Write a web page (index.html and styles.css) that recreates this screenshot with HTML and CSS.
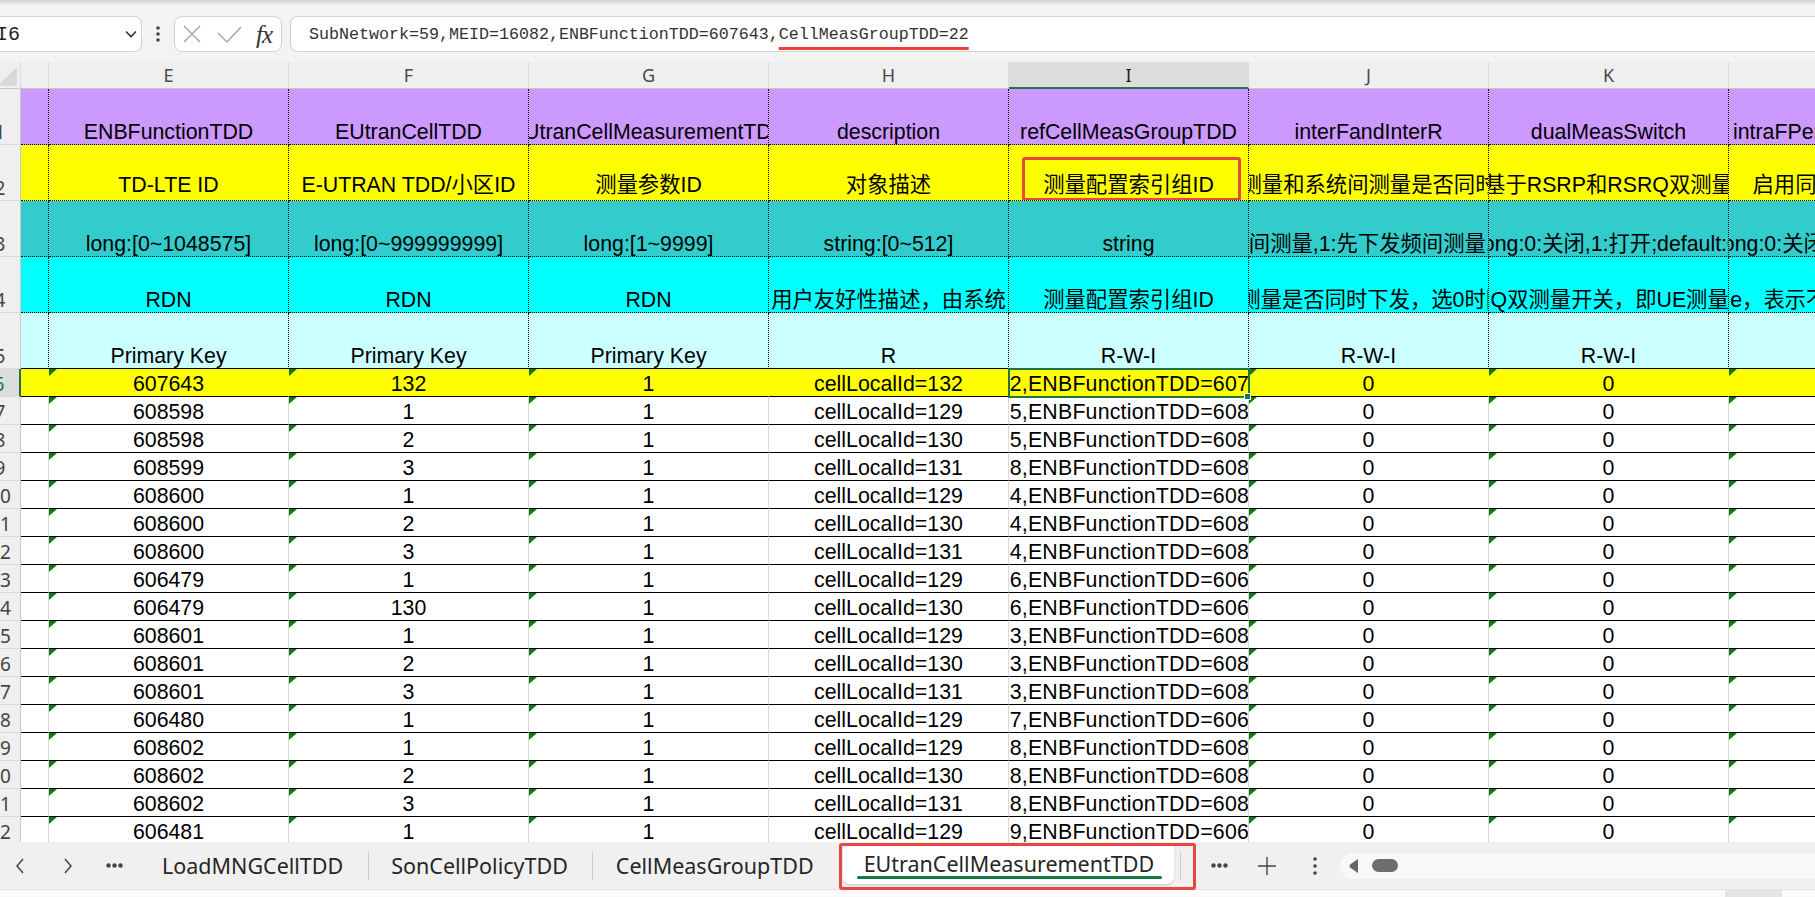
FILE: index.html
```html
<!DOCTYPE html>
<html lang="zh-CN">
<head>
<meta charset="utf-8">
<title>EUtranCellMeasurementTDD</title>
<link rel="stylesheet" href="styles.css">
</head>
<body>
<div class="app">
  <div class="topstrip"></div>
  <div class="toolbar">
    <div class="namebox">
      <span class="ref">I6</span>
      <svg width="12" height="8" viewBox="0 0 12 8"><polyline points="1,1.5 6,6.5 11,1.5" fill="none" stroke="#333" stroke-width="1.6"/></svg>
    </div>
    <div class="vdots"><svg width="4" height="16" viewBox="0 0 4 16"><circle cx="2" cy="2" r="1.8" fill="#444"/><circle cx="2" cy="8" r="1.8" fill="#444"/><circle cx="2" cy="14" r="1.8" fill="#444"/></svg></div>
    <div class="fxbox">
      <svg class="ic-x" width="18" height="18" viewBox="0 0 18 18"><path d="M1 1L17 17M17 1L1 17" stroke="#a8a8a8" stroke-width="1.5" fill="none"/></svg>
      <svg class="ic-ok" width="25" height="17" viewBox="0 0 25 17"><polyline points="1,7 10,16 24,1" fill="none" stroke="#a8a8a8" stroke-width="1.5"/></svg>
      <span class="fx">fx</span>
    </div>
    <div class="formula">SubNetwork=59,MEID=16082,ENBFunctionTDD=607643,<span class="mark">CellMeasGroupTDD=22</span></div>
  </div>
  <div class="gap"></div>

  <div class="sheet">
    <div class="row colhdr">
      <div class="corner"><svg width="21" height="26" viewBox="0 0 21 26"><polygon points="17,5 17,24 -3,24" fill="#d9d9d9"/></svg></div>
      <div class="ch"></div>
      <div class="ch">E</div>
      <div class="ch">F</div>
      <div class="ch">G</div>
      <div class="ch">H</div>
      <div class="ch on">I</div>
      <div class="ch">J</div>
      <div class="ch">K</div>
      <div class="ch">L</div>
    </div>

    <div class="row hrow r1">
      <div class="rh"><span>1</span></div>
      <div class="c"></div>
      <div class="c">ENBFunctionTDD</div>
      <div class="c">EUtranCellTDD</div>
      <div class="c">EUtranCellMeasurementTDD</div>
      <div class="c">description</div>
      <div class="c">refCellMeasGroupTDD</div>
      <div class="c">interFandInterR</div>
      <div class="c">dualMeasSwitch</div>
      <div class="c">intraFPeriodMeasSwitch</div>
    </div>

    <div class="row hrow r2">
      <div class="rh"><span>2</span></div>
      <div class="c"></div>
      <div class="c">TD-LTE ID</div>
      <div class="c">E-UTRAN TDD/小区ID</div>
      <div class="c">测量参数ID</div>
      <div class="c">对象描述</div>
      <div class="c">测量配置索引组ID<i class="note"></i></div>
      <div class="c">频间测量和系统间测量是否同时下发</div>
      <div class="c">基于RSRP和RSRQ双测量</div>
      <div class="c">启用同频周期性测量</div>
    </div>

    <div class="row hrow r3">
      <div class="rh"><span>3</span></div>
      <div class="c"></div>
      <div class="c">long:[0~1048575]</div>
      <div class="c">long:[0~999999999]</div>
      <div class="c">long:[1~9999]</div>
      <div class="c">string:[0~512]</div>
      <div class="c">string</div>
      <div class="c">long: 0:同时下发频间和系统间测量,1:先下发频间测量,再下发系统间测量;default:0</div>
      <div class="c">long:0:关闭,1:打开;default:0</div>
      <div class="c">long:0:关闭,1:打开;default:0</div>
    </div>

    <div class="row hrow r4">
      <div class="rh"><span>4</span></div>
      <div class="c"></div>
      <div class="c">RDN</div>
      <div class="c">RDN</div>
      <div class="c">RDN</div>
      <div class="c">用户友好性描述，由系统</div>
      <div class="c">测量配置索引组ID</div>
      <div class="c">频间测量和系统间测量是否同时下发，选0时同时下发，选1时先</div>
      <div class="c">基于RSRP和RSRQ双测量开关，即UE测量时同时上报RSRP</div>
      <div class="c">True，表示不启用同频周期测量</div>
    </div>

    <div class="row hrow r5">
      <div class="rh"><span>5</span></div>
      <div class="c"></div>
      <div class="c">Primary Key</div>
      <div class="c">Primary Key</div>
      <div class="c">Primary Key</div>
      <div class="c">R</div>
      <div class="c">R-W-I</div>
      <div class="c">R-W-I</div>
      <div class="c">R-W-I</div>
      <div class="c"></div>
    </div>

    <div class="row drow r6">
      <div class="rh"><span>6</span></div>
      <div class="c"></div>
      <div class="c t">607643</div>
      <div class="c t">132</div>
      <div class="c t">1</div>
      <div class="c">cellLocalId=132</div>
      <div class="c sel">SubNetwork=59,MEID=16082,ENBFunctionTDD=607643,CellMeasGroupTDD=22</div>
      <div class="c t">0</div>
      <div class="c t">0</div>
      <div class="c t"></div>
      <i class="handle"></i>
    </div>

    <div class="row drow">
      <div class="rh"><span>7</span></div>
      <div class="c"></div>
      <div class="c t">608598</div>
      <div class="c t">1</div>
      <div class="c t">1</div>
      <div class="c">cellLocalId=129</div>
      <div class="c">SubNetwork=59,MEID=16085,ENBFunctionTDD=608598,CellMeasGroupTDD=25</div>
      <div class="c t">0</div>
      <div class="c t">0</div>
      <div class="c t"></div>
    </div>

    <div class="row drow">
      <div class="rh"><span>8</span></div>
      <div class="c"></div>
      <div class="c t">608598</div>
      <div class="c t">2</div>
      <div class="c t">1</div>
      <div class="c">cellLocalId=130</div>
      <div class="c">SubNetwork=59,MEID=16085,ENBFunctionTDD=608598,CellMeasGroupTDD=26</div>
      <div class="c t">0</div>
      <div class="c t">0</div>
      <div class="c t"></div>
    </div>

    <div class="row drow">
      <div class="rh"><span>9</span></div>
      <div class="c"></div>
      <div class="c t">608599</div>
      <div class="c t">3</div>
      <div class="c t">1</div>
      <div class="c">cellLocalId=131</div>
      <div class="c">SubNetwork=59,MEID=16088,ENBFunctionTDD=608599,CellMeasGroupTDD=27</div>
      <div class="c t">0</div>
      <div class="c t">0</div>
      <div class="c t"></div>
    </div>

    <div class="row drow">
      <div class="rh"><span>10</span></div>
      <div class="c"></div>
      <div class="c t">608600</div>
      <div class="c t">1</div>
      <div class="c t">1</div>
      <div class="c">cellLocalId=129</div>
      <div class="c">SubNetwork=59,MEID=16084,ENBFunctionTDD=608600,CellMeasGroupTDD=28</div>
      <div class="c t">0</div>
      <div class="c t">0</div>
      <div class="c t"></div>
    </div>

    <div class="row drow">
      <div class="rh"><span>11</span></div>
      <div class="c"></div>
      <div class="c t">608600</div>
      <div class="c t">2</div>
      <div class="c t">1</div>
      <div class="c">cellLocalId=130</div>
      <div class="c">SubNetwork=59,MEID=16084,ENBFunctionTDD=608600,CellMeasGroupTDD=29</div>
      <div class="c t">0</div>
      <div class="c t">0</div>
      <div class="c t"></div>
    </div>

    <div class="row drow">
      <div class="rh"><span>12</span></div>
      <div class="c"></div>
      <div class="c t">608600</div>
      <div class="c t">3</div>
      <div class="c t">1</div>
      <div class="c">cellLocalId=131</div>
      <div class="c">SubNetwork=59,MEID=16084,ENBFunctionTDD=608600,CellMeasGroupTDD=30</div>
      <div class="c t">0</div>
      <div class="c t">0</div>
      <div class="c t"></div>
    </div>

    <div class="row drow">
      <div class="rh"><span>13</span></div>
      <div class="c"></div>
      <div class="c t">606479</div>
      <div class="c t">1</div>
      <div class="c t">1</div>
      <div class="c">cellLocalId=129</div>
      <div class="c">SubNetwork=59,MEID=16086,ENBFunctionTDD=606479,CellMeasGroupTDD=31</div>
      <div class="c t">0</div>
      <div class="c t">0</div>
      <div class="c t"></div>
    </div>

    <div class="row drow">
      <div class="rh"><span>14</span></div>
      <div class="c"></div>
      <div class="c t">606479</div>
      <div class="c t">130</div>
      <div class="c t">1</div>
      <div class="c">cellLocalId=130</div>
      <div class="c">SubNetwork=59,MEID=16086,ENBFunctionTDD=606479,CellMeasGroupTDD=32</div>
      <div class="c t">0</div>
      <div class="c t">0</div>
      <div class="c t"></div>
    </div>

    <div class="row drow">
      <div class="rh"><span>15</span></div>
      <div class="c"></div>
      <div class="c t">608601</div>
      <div class="c t">1</div>
      <div class="c t">1</div>
      <div class="c">cellLocalId=129</div>
      <div class="c">SubNetwork=59,MEID=16083,ENBFunctionTDD=608601,CellMeasGroupTDD=33</div>
      <div class="c t">0</div>
      <div class="c t">0</div>
      <div class="c t"></div>
    </div>

    <div class="row drow">
      <div class="rh"><span>16</span></div>
      <div class="c"></div>
      <div class="c t">608601</div>
      <div class="c t">2</div>
      <div class="c t">1</div>
      <div class="c">cellLocalId=130</div>
      <div class="c">SubNetwork=59,MEID=16083,ENBFunctionTDD=608601,CellMeasGroupTDD=34</div>
      <div class="c t">0</div>
      <div class="c t">0</div>
      <div class="c t"></div>
    </div>

    <div class="row drow">
      <div class="rh"><span>17</span></div>
      <div class="c"></div>
      <div class="c t">608601</div>
      <div class="c t">3</div>
      <div class="c t">1</div>
      <div class="c">cellLocalId=131</div>
      <div class="c">SubNetwork=59,MEID=16083,ENBFunctionTDD=608601,CellMeasGroupTDD=35</div>
      <div class="c t">0</div>
      <div class="c t">0</div>
      <div class="c t"></div>
    </div>

    <div class="row drow">
      <div class="rh"><span>18</span></div>
      <div class="c"></div>
      <div class="c t">606480</div>
      <div class="c t">1</div>
      <div class="c t">1</div>
      <div class="c">cellLocalId=129</div>
      <div class="c">SubNetwork=59,MEID=16087,ENBFunctionTDD=606480,CellMeasGroupTDD=36</div>
      <div class="c t">0</div>
      <div class="c t">0</div>
      <div class="c t"></div>
    </div>

    <div class="row drow">
      <div class="rh"><span>19</span></div>
      <div class="c"></div>
      <div class="c t">608602</div>
      <div class="c t">1</div>
      <div class="c t">1</div>
      <div class="c">cellLocalId=129</div>
      <div class="c">SubNetwork=59,MEID=16088,ENBFunctionTDD=608602,CellMeasGroupTDD=37</div>
      <div class="c t">0</div>
      <div class="c t">0</div>
      <div class="c t"></div>
    </div>

    <div class="row drow">
      <div class="rh"><span>20</span></div>
      <div class="c"></div>
      <div class="c t">608602</div>
      <div class="c t">2</div>
      <div class="c t">1</div>
      <div class="c">cellLocalId=130</div>
      <div class="c">SubNetwork=59,MEID=16088,ENBFunctionTDD=608602,CellMeasGroupTDD=38</div>
      <div class="c t">0</div>
      <div class="c t">0</div>
      <div class="c t"></div>
    </div>

    <div class="row drow">
      <div class="rh"><span>21</span></div>
      <div class="c"></div>
      <div class="c t">608602</div>
      <div class="c t">3</div>
      <div class="c t">1</div>
      <div class="c">cellLocalId=131</div>
      <div class="c">SubNetwork=59,MEID=16088,ENBFunctionTDD=608602,CellMeasGroupTDD=39</div>
      <div class="c t">0</div>
      <div class="c t">0</div>
      <div class="c t"></div>
    </div>

    <div class="row drow">
      <div class="rh"><span>22</span></div>
      <div class="c"></div>
      <div class="c t">606481</div>
      <div class="c t">1</div>
      <div class="c t">1</div>
      <div class="c">cellLocalId=129</div>
      <div class="c">SubNetwork=59,MEID=16089,ENBFunctionTDD=606481,CellMeasGroupTDD=40</div>
      <div class="c t">0</div>
      <div class="c t">0</div>
      <div class="c t"></div>
    </div>
  </div>

  <div class="tabbar">
    <div class="nb nb1"><svg width="10" height="16" viewBox="0 0 10 16"><polyline points="8,1 2,8 8,15" fill="none" stroke="#444" stroke-width="1.5"/></svg></div>
    <div class="nb nb2"><svg width="10" height="16" viewBox="0 0 10 16"><polyline points="2,1 8,8 2,15" fill="none" stroke="#444" stroke-width="1.5"/></svg></div>
    <div class="nb nb3"><svg width="17" height="5" viewBox="0 0 17 5"><circle cx="2.5" cy="2.5" r="2.2" fill="#444"/><circle cx="8.5" cy="2.5" r="2.2" fill="#444"/><circle cx="14.5" cy="2.5" r="2.2" fill="#444"/></svg></div>
    <div class="tab tab1">LoadMNGCellTDD</div>
    <div class="sep"></div>
    <div class="tab tab2">SonCellPolicyTDD</div>
    <div class="sep"></div>
    <div class="tab tab3">CellMeasGroupTDD</div>
    <div class="tab active">EUtranCellMeasurementTDD<i class="tabnote"></i></div>
    <div class="sep sep2"></div>
    <div class="nb nb4"><svg width="17" height="5" viewBox="0 0 17 5"><circle cx="2.5" cy="2.5" r="2.2" fill="#444"/><circle cx="8.5" cy="2.5" r="2.2" fill="#444"/><circle cx="14.5" cy="2.5" r="2.2" fill="#444"/></svg></div>
    <div class="nb nb5"><svg width="18" height="18" viewBox="0 0 18 18"><path d="M9 0V18M0 9H18" stroke="#444" stroke-width="1.4" fill="none"/></svg></div>
    <div class="nb nb6"><svg width="4" height="20" viewBox="0 0 4 20"><circle cx="2" cy="3" r="1.8" fill="#444"/><circle cx="2" cy="10" r="1.8" fill="#444"/><circle cx="2" cy="17" r="1.8" fill="#444"/></svg></div>
    <div class="track">
      <svg width="9" height="14" viewBox="0 0 9 14"><path d="M9 0V14L1 8.5Q0 7 1 5.5Z" fill="#666"/></svg>
      <span class="thumb"></span>
    </div>
  </div>
  <div class="status"><i></i></div>
</div>
</body>
</html>
```

FILE: styles.css
```css
* { box-sizing: border-box; margin: 0; padding: 0; }
html, body { width: 1815px; height: 897px; overflow: hidden; background: #f3f3f3; }
body { font-family: "Liberation Sans", Arial, "Noto Sans CJK SC", sans-serif; color: #000; }
i { font-style: normal; }

.app { display: flex; flex-direction: column; height: 897px; }

.topstrip { height: 16px; flex: none; background: linear-gradient(#d2d2d2, #f3f3f3 5px, #f3f3f3); }

.toolbar { height: 36px; flex: none; display: flex; align-items: stretch; }
.namebox {
  width: 142px; background: #fff; border: 1px solid #d2d2d2; border-left: 0;
  border-radius: 0 8px 8px 0; display: flex; align-items: center; justify-content: space-between;
  padding-right: 4px; overflow: hidden;
}
.namebox .ref { font: 20px "Liberation Mono", monospace; color: #222; margin-left: -4px; }
.vdots { width: 32px; display: flex; align-items: center; justify-content: center; }
.fxbox {
  width: 108px; background: #fff; border: 1px solid #d2d2d2; border-radius: 8px;
  display: flex; align-items: center; padding-left: 8px;
}
.ic-x { margin-right: 16px; }
.ic-ok { margin-right: 14px; }
.fx { font: italic 25px "Liberation Serif", serif; color: #333; line-height: 1; letter-spacing: -1px; }
.formula {
  flex: 1; margin-left: 8px; background: #fff; border: 1px solid #d2d2d2; border-right: 0;
  border-radius: 8px 0 0 8px; display: flex; align-items: center; padding-left: 18px;
  font: 16.67px "Liberation Mono", monospace; color: #333; white-space: nowrap;
}
.mark { text-decoration: underline; text-decoration-color: #e8413b; text-decoration-thickness: 3px; text-underline-offset: 8px; }

.gap { height: 10px; flex: none; }

.sheet { height: 780px; flex: none; overflow: hidden; background: #fff; }
.row { display: grid; grid-template-columns: 21px 28px repeat(8, 240px); }

.colhdr { height: 27px; background: #efefef; }
.corner { border-bottom: 1px solid #c8c8c8; border-right: 1px solid #dadada; overflow: hidden; }
.corner svg { display: block; }
.ch {
  border-right: 1px solid #dadada; border-bottom: 1px solid #c8c8c8;
  display: flex; align-items: center; justify-content: center;
  font: 18px "Noto Sans", sans-serif; color: #484848;
}
.ch.on { background: #dcdcdc; border-bottom: 2px solid #217346; color: #1e1e1e; }

.hrow { height: 56px; }
.drow { height: 28px; }

.rh {
  background: #efefef; border-right: 1px solid #c9c9c9; border-bottom: 1px solid #dadada;
  display: flex; justify-content: flex-end; align-items: flex-end; overflow: hidden;
  font: 19px/24px "Noto Sans", sans-serif; color: #444;
}
.rh span { flex: 0 0 40px; text-align: center; }

.c {
  position: relative; display: flex; justify-content: center; align-items: flex-end;
  overflow: hidden; white-space: nowrap; line-height: 24px; font-size: 21.33px;
}
.hrow .c { border-right: 1px dotted #000; border-bottom: 1px dotted #000; }
.r1 .c { background: #cc99ff; }
.r2 .c { background: #ffff00; padding-bottom: 3px; }
.r3 .c { background: #33cccc; }
.r4 .c { background: #00ffff; }
.r5 .c { background: #ccffff; border-bottom-style: solid; }

.drow .c { border-right: 1px solid #dadada; border-bottom: 1px solid #000; }
.drow .c:nth-child(7) { letter-spacing: 0.2px; }
.r6 { position: relative; }
.r6 .c { background: #ffff00; border-right-color: #ffff00; }
.r6 .rh { background: #dcdcdc; border-right: 2px solid #217346; color: #217346; }

.t::before {
  content: ""; position: absolute; left: 0; top: 0;
  border-top: 7px solid #107c10; border-right: 8px solid transparent;
}
.sel { outline: 2px solid #217346; outline-offset: -1px; z-index: 1; }
.handle {
  position: absolute; left: 1244px; top: 24px; width: 7px; height: 7px;
  background: #217346; border: 1px solid #fff; z-index: 2;
}
.note {
  position: absolute; left: 13px; top: 12px; width: 219px; height: 44px;
  border: 3px solid #e8473f; border-radius: 3px;
}

.tabbar {
  height: 47px; flex: none; display: flex; align-items: center; background: #f0f0f0;
  font: 21.5px "Noto Sans", sans-serif; color: #262626; white-space: nowrap;
}
.nb { display: flex; align-items: center; justify-content: center; height: 100%; flex: none; }
.nb1 { width: 40px; }
.nb2 { width: 56px; }
.nb3 { width: 36px; }
.nb4 { width: 48px; margin-left: 14px; }
.nb5 { width: 48px; }
.nb6 { width: 48px; }
.tab { flex: none; }
.tab1 { padding: 0 25px 0 30px; }
.tab2 { padding: 0 24px 0 22px; }
.tab3 { padding: 0 29px 0 23px; }
.sep { width: 1px; height: 28px; background: #cdcdcd; flex: none; }
.sep2 { margin-left: 6px; }
.tab.active {
  position: relative; align-self: flex-start; margin-top: 3px; height: 39px;
  display: flex; align-items: center; padding: 0 20px 2px 21px; background: #fff;
  border-radius: 0 0 7px 7px; box-shadow: 0 1px 2px rgba(0,0,0,0.18);
}
.tab.active::after {
  content: ""; position: absolute; left: 14px; right: 12px; bottom: 5px; height: 3px;
  border-radius: 2px; background: #107c41;
}
.tabnote {
  position: absolute; left: -4px; top: -2px; width: 357px; height: 47px;
  border: 3px solid #e8473f; border-radius: 3px;
}
.track {
  flex: 1; height: 26px; margin-left: 1px; border-radius: 13px 0 0 13px; background: #f8f8f8;
  display: flex; align-items: center; padding-left: 9px; gap: 14px;
}
.thumb { width: 26px; height: 13px; border-radius: 7px; background: #6e6e6e; }
.status { height: 8px; flex: none; background: #fafafa; border-top: 1px solid #e3e3e3; display: flex; justify-content: flex-end; }
.status i { width: 57px; background: #e4e4e4; margin-right: 33px; }
```
